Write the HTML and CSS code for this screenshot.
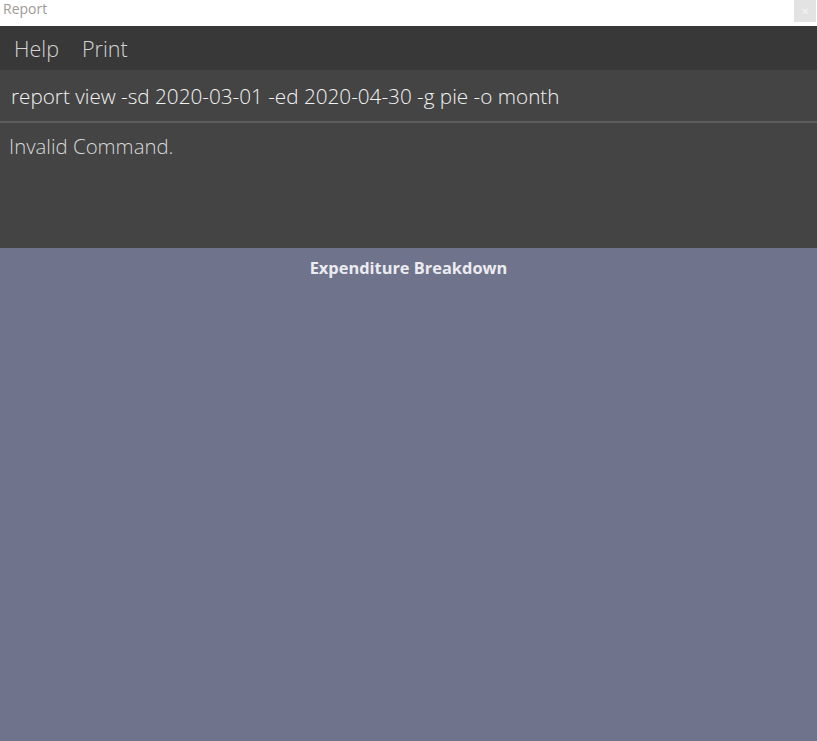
FILE: index.html
```html
<!DOCTYPE html>
<html>
<head>
<meta charset="utf-8">
<link rel="stylesheet" href="styles.css">
</head>
<body>
<div class="window">
  <div class="titlebar">
    <span class="title">Report</span>
    <span class="close">&#x2715;</span>
  </div>
  <div class="menubar">
    <span class="menu-item">Help</span>
    <span class="menu-item">Print</span>
  </div>
  <div class="command">report view -sd 2020-03-01 -ed 2020-04-30 -g pie -o month</div>
  <div class="result">Invalid Command.</div>
  <div class="chart">
    <div class="chart-title">Expenditure Breakdown</div>
  </div>
</div>
</body>
</html>
```

FILE: styles.css
```css
html, body {
  margin: 0;
  padding: 0;
  height: 100%;
  overflow: hidden;
}
body {
  font-family: "Open Sans", "Noto Sans", sans-serif;
}
.window {
  display: flex;
  flex-direction: column;
  height: 741px;
}
.titlebar {
  height: 26px;
  background: #ffffff;
  display: flex;
  justify-content: space-between;
  align-items: flex-start;
}
.title {
  font-size: 14px;
  color: #a09a94;
  padding-left: 3px;
  line-height: 17px;
}
.close {
  width: 22px;
  height: 22px;
  margin-right: 1px;
  background: #e3e3e3;
  color: #f4f4f4;
  font-size: 10px;
  display: flex;
  align-items: center;
  justify-content: center;
}
.menubar {
  height: 44px;
  background: #383838;
  display: flex;
  align-items: center;
  gap: 23px;
  padding-left: 14px;
}
.menu-item {
  font-size: 21.5px;
  font-weight: 300;
  color: #d4d4d4;
}
.command {
  background: #444444;
  color: #f2f2f2;
  font-size: 20.7px;
  font-weight: 300;
  padding-left: 11px;
  line-height: 52px;
  border-bottom: 2px solid #5d5d5d;
  box-sizing: border-box;
  height: 53px;
}
.result {
  height: 125px;
  background: #444444;
  color: #d8d8d8;
  font-size: 20.4px;
  font-weight: 300;
  padding: 9px 0 0 9px;
  box-sizing: border-box;
}
.chart {
  flex: 1;
  background: #6f738c;
}
.chart-title {
  text-align: center;
  font-weight: 700;
  font-size: 16.4px;
  color: #ececf0;
  padding-top: 8px;
}
```
